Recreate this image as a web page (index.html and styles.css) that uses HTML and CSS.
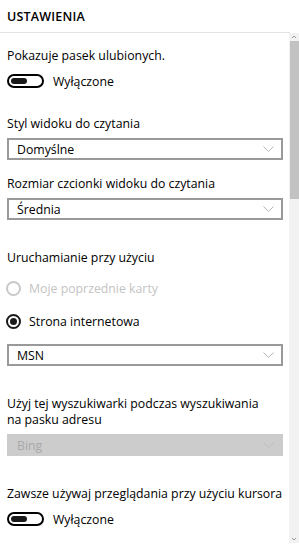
FILE: index.html
```html
<!DOCTYPE html>
<html lang="pl">
<head>
  <meta charset="UTF-8" />
  <meta name="viewport" content="width=device-width, initial-scale=1.0" />
  <title>Ustawienia</title>
  <link rel="stylesheet" href="styles.css">
</head>
<body>
  <header class="panel-header">USTAWIENIA</header>
  <div class="panel-body">
    <div class="content">
      <p class="label first">Pokazuje pasek ulubionych.</p>
      <div class="toggle-row">
        <span class="toggle"><span class="knob"></span></span>
        <span>Wyłączone</span>
      </div>

      <p class="label gap-lg">Styl widoku do czytania</p>
      <div class="select">
        <span>Domyślne</span>
        <svg class="chevron" width="11" height="6" viewBox="0 0 11 6"><polyline points="0.5,0.5 5.5,5.5 10.5,0.5" fill="none" stroke="#b5b5b5" stroke-width="1"/></svg>
      </div>

      <p class="label gap-md">Rozmiar czcionki widoku do czytania</p>
      <div class="select">
        <span>Średnia</span>
        <svg class="chevron" width="11" height="6" viewBox="0 0 11 6"><polyline points="0.5,0.5 5.5,5.5 10.5,0.5" fill="none" stroke="#b5b5b5" stroke-width="1"/></svg>
      </div>

      <p class="label gap-xl">Uruchamianie przy użyciu</p>
      <div class="radio-row disabled first-radio">
        <span class="radio"></span>
        <span>Moje poprzednie karty</span>
      </div>
      <div class="radio-row second-radio">
        <span class="radio checked"></span>
        <span>Strona internetowa</span>
      </div>
      <div class="select after-radio">
        <span>MSN</span>
        <svg class="chevron" width="11" height="6" viewBox="0 0 11 6"><polyline points="0.5,0.5 5.5,5.5 10.5,0.5" fill="none" stroke="#b5b5b5" stroke-width="1"/></svg>
      </div>

      <p class="label gap-xl">Użyj tej wyszukiwarki podczas wyszukiwania<br>na pasku adresu</p>
      <div class="select disabled">
        <span>Bing</span>
        <svg class="chevron" width="11" height="6" viewBox="0 0 11 6"><polyline points="0.5,0.5 5.5,5.5 10.5,0.5" fill="none" stroke="#bdbdbd" stroke-width="1"/></svg>
      </div>

      <p class="label gap-xl nowrap">Zawsze używaj przeglądania przy użyciu kursora</p>
      <div class="toggle-row">
        <span class="toggle"><span class="knob"></span></span>
        <span>Wyłączone</span>
      </div>
    </div>
    <div class="scrollbar">
      <svg class="arrow" width="10" height="8" viewBox="0 0 10 8"><polyline points="3,5 5,3 7,5" fill="none" stroke="#9a9a9a" stroke-width="1"/></svg>
      <div class="thumb"></div>
      <div class="track"></div>
      <svg class="arrow" width="10" height="8" viewBox="0 0 10 8"><polyline points="3,3 5,5 7,3" fill="none" stroke="#9a9a9a" stroke-width="1"/></svg>
    </div>
  </div>
</body>
</html>
```

FILE: styles.css
```css
body {
  font-family: 'Open Sans', 'Noto Sans', sans-serif;
  margin: 0;
  padding: 0;
  background-color: #fff;
  color: #000;
  width: 299px;
  height: 544px;
  overflow: hidden;
  font-size: 12.3px;
}
.panel-header {
  width: 290px;
  height: 33px;
  line-height: 33px;
  border-bottom: 1px solid #e3e3e3;
  padding-left: 7px;
  box-sizing: border-box;
  font-weight: 600;
  font-size: 12.5px;
  letter-spacing: 0.2px;
}
.panel-body {
  display: flex;
  height: 510px;
}
.content {
  width: 289px;
  padding: 0 6px 0 7px;
  box-sizing: border-box;
}
.label {
  margin: 0;
  line-height: 16px;
}
.label.first {
  margin-top: 15px;
}
.nowrap {
  white-space: nowrap;
}
.gap-lg {
  margin-top: 28px !important;
}
.gap-md {
  margin-top: 16px !important;
}
.gap-xl {
  margin-top: 30px !important;
}
.toggle-row {
  display: flex;
  align-items: center;
  gap: 9px;
  height: 14px;
  margin-top: 10px;
}
.toggle {
  width: 37px;
  height: 14px;
  border: 2px solid #000;
  border-radius: 8px;
  box-sizing: border-box;
  display: flex;
  align-items: center;
  padding-left: 2px;
}
.knob {
  width: 16px;
  height: 6px;
  border-radius: 3px;
  background-color: #1a1a1a;
}
.select {
  display: flex;
  align-items: center;
  justify-content: space-between;
  height: 22px;
  margin-top: 6px;
  border: 2px solid #999;
  padding: 0 7px 0 8px;
  box-sizing: border-box;
}
.select.after-radio {
  margin-top: 15px;
}
.select.disabled {
  background-color: #cccccc;
  border-color: #cccccc;
  color: #a9a9a9;
}
.chevron {
  display: block;
}
.radio-row {
  display: flex;
  align-items: center;
  gap: 8px;
  height: 16px;
}
.first-radio {
  margin-top: 14px;
}
.second-radio {
  margin-top: 17px;
}
.radio-row.disabled {
  color: #c4c4c4;
}
.radio {
  width: 15px;
  height: 15px;
  border: 2px solid #c9c9c9;
  border-radius: 50%;
  box-sizing: border-box;
  display: flex;
  align-items: center;
  justify-content: center;
  margin-left: -1px;
}
.radio.checked {
  border-color: #1a1a1a;
}
.radio.checked::after {
  content: '';
  width: 7px;
  height: 7px;
  border-radius: 50%;
  background-color: #1a1a1a;
}
.scrollbar {
  width: 10px;
  background-color: #f2f2f2;
  display: flex;
  flex-direction: column;
  align-items: center;
}
.arrow {
  display: block;
  flex-shrink: 0;
}
.thumb {
  width: 9px;
  height: 158px;
  background-color: #c2c2c2;
}
.track {
  flex: 1;
}
```
